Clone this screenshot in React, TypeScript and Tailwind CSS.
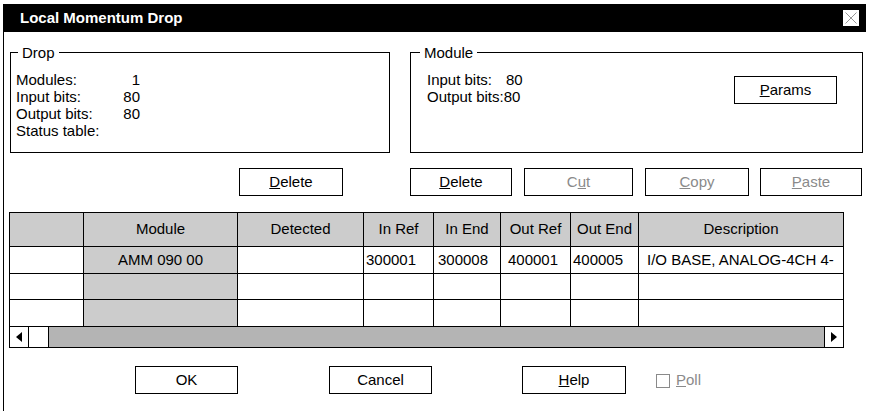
import React from "react";

const font = "font-['Liberation_Sans',Arial,Helvetica,sans-serif]";

function Btn({ children, w, disabled, className = "" }: { children: React.ReactNode; w: string; disabled?: boolean; className?: string }) {
  return (
    <div
      className={`${w} h-[28px] border border-black bg-white flex items-center justify-center text-[15px] ${disabled ? "text-[#8a8a8a]" : "text-black"} ${className}`}
    >
      {children}
    </div>
  );
}

const cols = "grid grid-cols-[74px_154px_126px_70px_67px_70px_68px_205px]";

const headers = ["", "Module", "Detected", "In Ref", "In End", "Out Ref", "Out End", "Description"];

const rows = [
  ["", "AMM 090 00", "", "300001", "300008", "400001", "400005", "I/O BASE, ANALOG-4CH 4-"],
  ["", "", "", "", "", "", "", ""],
  ["", "", "", "", "", "", "", ""],
];

const cellPad = ["", "justify-center", "", "pl-[2px]", "pl-[4px]", "pl-[7px]", "pl-[2px]", "pl-[8px]"];
const rowH = ["h-[27px]", "h-[26px]", "h-[27px]"];

export default function App() {
  return (
    <div className={`w-[869px] h-[411px] bg-white overflow-hidden text-black ${font}`}>
      <div className="pt-[4px] pl-[3px] w-[866px]">
        {/* Title bar */}
        <div className="h-[28px] bg-black flex items-center justify-between pl-[17px] pr-[7px]">
          <span className="text-white font-bold text-[15px]">Local Momentum Drop</span>
          <div className="w-[16px] h-[16px] bg-white flex items-center justify-center">
            <svg width="14" height="14" viewBox="0 0 14 14">
              <path d="M1.5 1.5 L12.5 12.5 M12.5 1.5 L1.5 12.5" stroke="#8a8a8a" strokeWidth="0.9" fill="none" />
            </svg>
          </div>
        </div>

        {/* Body */}
        <div className="border-l border-black h-[379px]">
          {/* Group boxes */}
          <div className="flex pt-[12px] pl-[6px] gap-[20px]">
            <fieldset className="w-[380px] h-[109px] border border-black">
              <legend className="ml-[7px] px-[4px] text-[15px] leading-[17px]">Drop</legend>
              <div className="pl-[5px] pt-[10px] text-[15px] leading-[17px]">
                {[
                  ["Modules:", "1"],
                  ["Input bits:", "80"],
                  ["Output bits:", "80"],
                  ["Status table:", ""],
                ].map(([l, v]) => (
                  <div key={l} className="flex">
                    <span className="w-[100px]">{l}</span>
                    <span className="w-[24px] text-right">{v}</span>
                  </div>
                ))}
              </div>
            </fieldset>
            <fieldset className="w-[453px] h-[109px] border border-black">
              <legend className="ml-[9px] px-[4px] text-[15px] leading-[17px]">Module</legend>
              <div className="flex items-start justify-between pl-[16px] pr-[25px] pt-[10px]">
                <div className="text-[15px] leading-[17px]">
                  <div className="flex">
                    <span className="w-[79px]">Input bits:</span>
                    <span>80</span>
                  </div>
                  <div>Output bits:80</div>
                </div>
                <Btn w="w-[103px]" className="mt-[5px]">
                  <span className="underline">P</span>arams
                </Btn>
              </div>
            </fieldset>
          </div>

          {/* Edit buttons */}
          <div className="flex mt-[15px]">
            <Btn w="w-[104px]" className="ml-[235px]">
              <span className="underline">D</span>elete
            </Btn>
            <Btn w="w-[102px]" className="ml-[67px]">
              <span className="underline">D</span>elete
            </Btn>
            <Btn w="w-[109px]" disabled className="ml-[12px]">
              C<span className="underline">u</span>t
            </Btn>
            <Btn w="w-[104px]" disabled className="ml-[12px]">
              <span className="underline">C</span>opy
            </Btn>
            <Btn w="w-[102px]" disabled className="ml-[11px]">
              <span className="underline">P</span>aste
            </Btn>
          </div>

          {/* Table */}
          <div className="ml-[5px] mt-[16px] w-[835px] border-l border-t border-black text-[15px]">
            <div className={`${cols} h-[34px] bg-[#cccccc]`}>
              {headers.map((h, i) => (
                <div key={i} className="border-r border-b border-black flex items-center justify-center">
                  {h}
                </div>
              ))}
            </div>
            {rows.map((r, ri) => (
              <div key={ri} className={`${cols} ${rowH[ri]}`}>
                {r.map((c, ci) => (
                  <div
                    key={ci}
                    className={`border-r border-b border-black flex items-center whitespace-nowrap overflow-hidden ${cellPad[ci]} ${ci === 1 ? "bg-[#cccccc]" : "bg-white"}`}
                  >
                    {c}
                  </div>
                ))}
              </div>
            ))}
            {/* Horizontal scrollbar */}
            <div className="flex h-[21px] border-r border-b border-black">
              <div className="w-[19px] border-r border-black flex items-center justify-center bg-white">
                <svg width="6" height="10" viewBox="0 0 6 10">
                  <path d="M6 0 L0 5 L6 10 Z" fill="black" />
                </svg>
              </div>
              <div className="w-[20px] border-r border-black bg-white" />
              <div className="flex-1 bg-[#b4b4b4]" />
              <div className="w-[19px] border-l border-black flex items-center justify-center bg-white">
                <svg width="6" height="10" viewBox="0 0 6 10">
                  <path d="M0 0 L6 5 L0 10 Z" fill="black" />
                </svg>
              </div>
            </div>
          </div>

          {/* Dialog buttons */}
          <div className="flex items-center mt-[18px]">
            <Btn w="w-[103px]" className="ml-[131px]">OK</Btn>
            <Btn w="w-[103px]" className="ml-[91px]">Cancel</Btn>
            <Btn w="w-[104px]" className="ml-[90px]">
              <span className="underline">H</span>elp
            </Btn>
            <div className="ml-[30px] flex items-center gap-[6px] mt-[1px]">
              <div className="w-[14px] h-[14px] border border-[#8a8a8a] bg-white" />
              <span className="text-[15px] text-[#8a8a8a]">
                <span className="underline">P</span>oll
              </span>
            </div>
          </div>
        </div>
      </div>
    </div>
  );
}
